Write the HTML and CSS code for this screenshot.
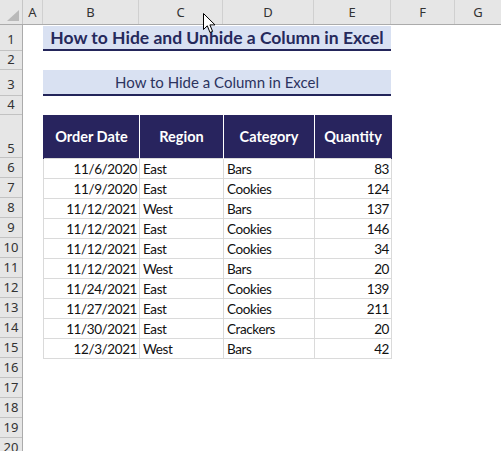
FILE: index.html
```html
<!DOCTYPE html>
<html lang="en">
<head>
    <meta charset="UTF-8">
    <title>How to Hide and Unhide a Column in Excel</title>
    <link rel="stylesheet" href="styles.css">
</head>
<body>
    <div class="sheet">
        <div class="col-heads">
            <div class="corner"><span class="corner-tri"></span></div>
            <div class="ch col-a">A</div>
            <div class="ch col-b">B</div>
            <div class="ch col-c">C</div>
            <div class="ch col-d">D</div>
            <div class="ch col-e">E</div>
            <div class="ch col-f">F</div>
            <div class="ch col-g">G</div>
        </div>

        <div class="grid-body">
            <div class="row-heads">
                <div class="rh tall-1">1</div>
                <div class="rh gap">2</div>
                <div class="rh tall-1">3</div>
                <div class="rh gap">4</div>
                <div class="rh head">5</div>
                <div class="rh">6</div>
                <div class="rh">7</div>
                <div class="rh">8</div>
                <div class="rh">9</div>
                <div class="rh">10</div>
                <div class="rh">11</div>
                <div class="rh">12</div>
                <div class="rh">13</div>
                <div class="rh">14</div>
                <div class="rh">15</div>
                <div class="rh">16</div>
                <div class="rh">17</div>
                <div class="rh">18</div>
                <div class="rh">19</div>
                <div class="rh">20</div>
            </div>

            <div class="content">
                <h1 class="title">How to Hide and Unhide a Column in Excel</h1>
                <h2 class="subtitle">How to Hide a Column in Excel</h2>

                <table class="data">
                    <colgroup>
                        <col class="c-date">
                        <col class="c-region">
                        <col class="c-cat">
                        <col class="c-qty">
                    </colgroup>
                    <thead>
                        <tr>
                            <th>Order Date</th>
                            <th>Region</th>
                            <th>Category</th>
                            <th>Quantity</th>
                        </tr>
                    </thead>
                    <tbody>
                        <tr><td class="num">11/6/2020</td><td>East</td><td>Bars</td><td class="num">83</td></tr>
                        <tr><td class="num">11/9/2020</td><td>East</td><td>Cookies</td><td class="num">124</td></tr>
                        <tr><td class="num">11/12/2021</td><td>West</td><td>Bars</td><td class="num">137</td></tr>
                        <tr><td class="num">11/12/2021</td><td>East</td><td>Cookies</td><td class="num">146</td></tr>
                        <tr><td class="num">11/12/2021</td><td>East</td><td>Cookies</td><td class="num">34</td></tr>
                        <tr><td class="num">11/12/2021</td><td>West</td><td>Bars</td><td class="num">20</td></tr>
                        <tr><td class="num">11/24/2021</td><td>East</td><td>Cookies</td><td class="num">139</td></tr>
                        <tr><td class="num">11/27/2021</td><td>East</td><td>Cookies</td><td class="num">211</td></tr>
                        <tr><td class="num">11/30/2021</td><td>East</td><td>Crackers</td><td class="num">20</td></tr>
                        <tr><td class="num">12/3/2021</td><td>West</td><td>Bars</td><td class="num">42</td></tr>
                    </tbody>
                </table>
            </div>
        </div>

        <!-- mouse pointer over the C/D column border -->
        <svg class="cursor" width="13" height="21" viewBox="0 0 13 21">
            <path d="M0.5 0.5 L0.5 16.5 L4.3 12.8 L7 19.5 L9.6 18.4 L6.9 11.9 L12 11.9 Z" fill="#fff" stroke="#000" stroke-width="1" stroke-linejoin="miter"/>
        </svg>
    </div>
</body>
</html>
```

FILE: styles.css
```css
body { margin: 0; background: #fff; font-family: Lato, "Open Sans", sans-serif; }
.sheet { position: relative; width: 501px; height: 451px; overflow: hidden; }

.col-heads { display: flex; height: 25px; background: #e6e6e6; border-bottom: 1px solid #ababab; box-sizing: border-box; }
.corner { position: relative; width: 23px; flex: none; border-right: 1px solid #c6c6c6; box-sizing: border-box; }
.corner-tri { position: absolute; right: 3px; bottom: 3px; width: 0; height: 0; border-left: 12px solid transparent; border-bottom: 11px solid #b9b9b9; }
.ch { flex: none; text-align: center; line-height: 24px; font-family: "Noto Sans", sans-serif; font-size: 13px; color: #333; border-right: 1px solid #d0d0d0; box-sizing: border-box; }
.col-a { width: 20px; }
.col-b { width: 96px; }
.col-c { width: 84px; }
.col-d { width: 91px; }
.col-e { width: 77px; }
.col-f { width: 64px; }
.col-g { flex: 1; border-right: none; }

.grid-body { display: flex; }
.row-heads { width: 23px; flex: none; background: #e6e6e6; border-right: 1px solid #ababab; box-sizing: border-box; }
.rh { height: 20px; display: flex; align-items: flex-end; justify-content: center; padding-bottom: 1px; box-sizing: border-box; border-bottom: 1px solid #c2c2c2; font-family: "Noto Sans", sans-serif; font-size: 13px; line-height: 17px; color: #333; }
.rh.tall-1 { height: 26px; padding-bottom: 2px; }
.rh.gap { height: 19px; }
.rh.head { height: 43px; padding-bottom: 0; }

.content { margin-left: 20px; width: 348px; }
.title { margin: 1px 0 0; height: 23px; line-height: 24px; background: #d9e1f2; border-bottom: 2px solid #23255a; text-align: center; font-size: 17.5px; font-weight: 700; color: #25295c; }
.subtitle { margin: 19px 0 0; height: 24px; line-height: 25px; background: #d9e1f2; border-bottom: 2px solid #23255a; text-align: center; font-size: 15px; font-weight: 400; color: #2c335e; }

.data { margin-top: 19px; border-collapse: collapse; table-layout: fixed; width: 348px; font-size: 13.5px; letter-spacing: -0.4px; color: #111; }
.c-date { width: 96px; }
.c-region { width: 84px; }
.c-cat { width: 91px; }
.c-qty { width: 77px; }
.data th { height: 43px; padding: 0; background: #28245e; color: #fff; font-size: 14.5px; font-weight: 700; letter-spacing: 0; text-align: center; border-left: 1px solid #fff; border-right: 1px solid #fff; overflow: hidden; white-space: nowrap; }
.data th:first-child { border-left-color: #28245e; }
.data th:last-child { border-right-color: #28245e; }
.data td { height: 20px; padding: 0 2px 0 3px; border: 1px solid #dadada; line-height: 18px; white-space: nowrap; overflow: hidden; box-sizing: border-box; }
.data .num { text-align: right; }

.cursor { position: absolute; left: 203px; top: 13px; }
```
